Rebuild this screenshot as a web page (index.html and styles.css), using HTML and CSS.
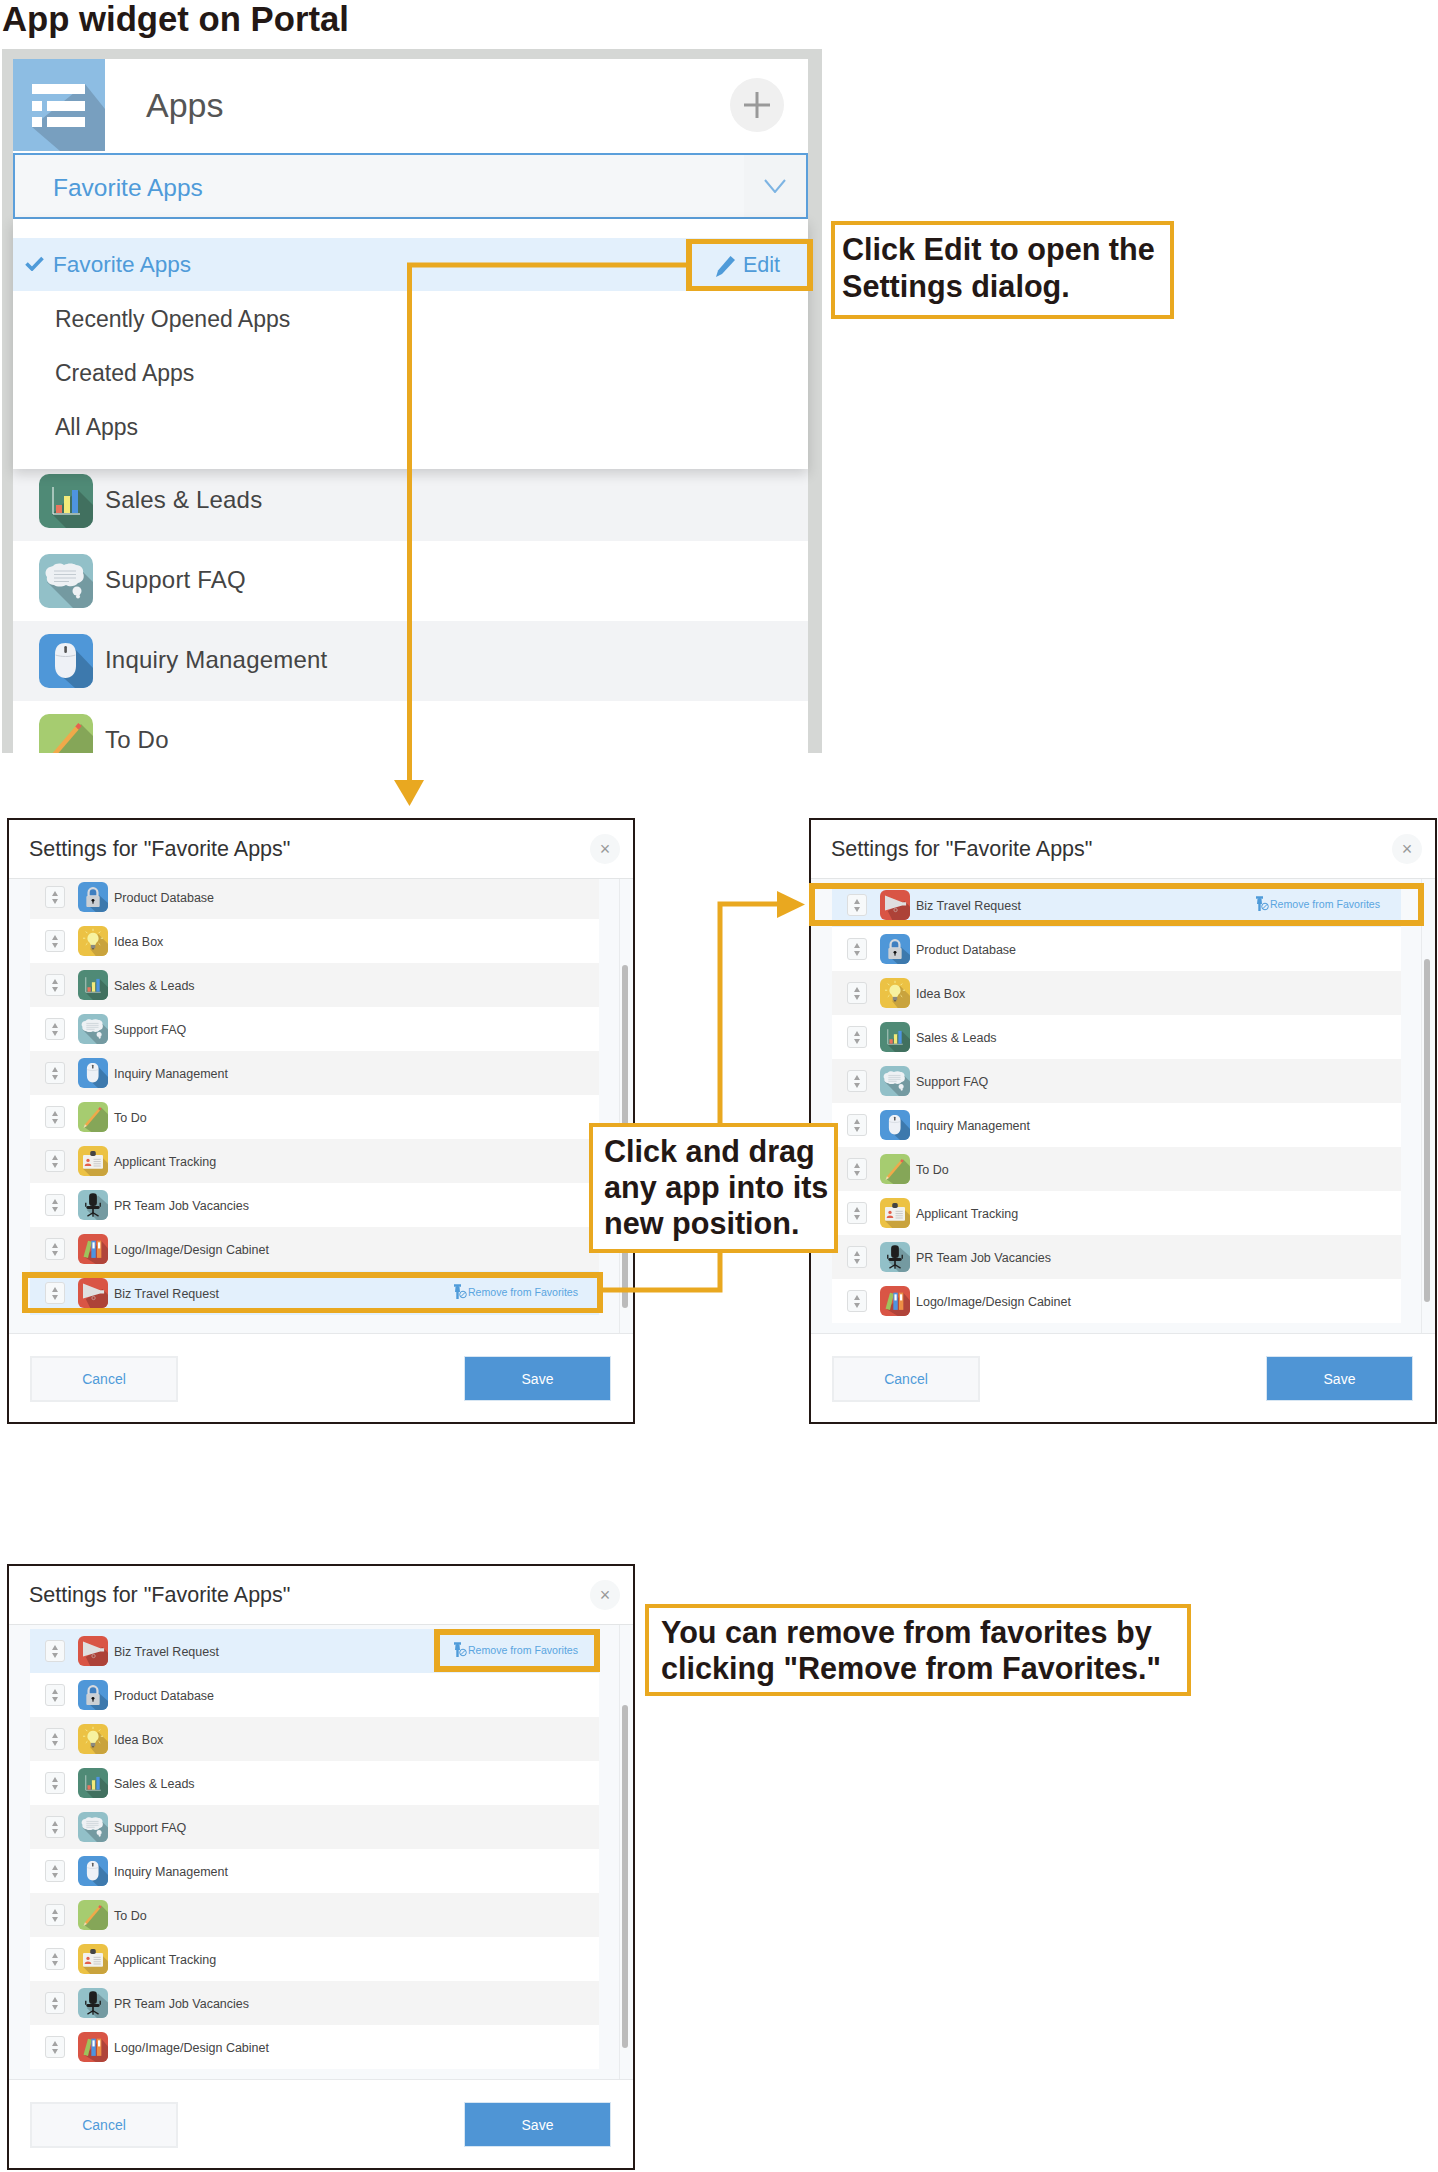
FILE: index.html
```html
<!DOCTYPE html>
<html lang="en">
<head>
    <meta charset="UTF-8">
    <title>App widget on Portal</title>
    <link rel="stylesheet" href="styles.css">
</head>
<body>

<svg class="icon-defs" width="0" height="0">
    <symbol id="i-sales" viewBox="0 0 54 54">
        <rect width="54" height="54" fill="#4f8a76"/>
        <polygon points="39,16 54,31 54,54 27,54 13,40" fill="#41705f"/>
        <path d="M14 13V40H41" fill="none" stroke="#fff" stroke-width="1"/>
        <rect x="17" y="31" width="6" height="8" fill="#e8755f"/>
        <rect x="25" y="22" width="6" height="17" fill="#f3ea7a"/>
        <rect x="33" y="16" width="6" height="23" fill="#4e94e0"/>
    </symbol>
    <symbol id="i-faq" viewBox="0 0 54 54">
        <rect width="54" height="54" fill="#92c0c8"/>
        <polygon points="44,18 54,28 54,54 34,54 8,28" fill="#749aa1"/>
        <path d="M14 12c3-3 8-3 11-1c4-2 9-2 12 0c5 0 8 4 7 8c2 4 0 9-5 10c-3 4-9 4-12 2c-4 2-9 2-12 0c-5 0-8-4-7-8c-3-4-1-9 3-10z" fill="#eef1f4"/>
        <path d="M15 17H37M15 20.5H37M15 24H37M15 27.5H30" stroke="#c3cbd1" stroke-width="1.2"/>
        <circle cx="38" cy="37" r="4.5" fill="#eef1f4"/>
        <circle cx="39" cy="42.5" r="2" fill="#eef1f4"/>
    </symbol>
    <symbol id="i-mouse" viewBox="0 0 54 54">
        <rect width="54" height="54" fill="#4f97d8"/>
        <polygon points="35,14 54,34 54,54 36,54 18,38" fill="#3d79ad"/>
        <path d="M26.5 9c6 0 10.5 3 10.5 11v12c0 8-5 12-10.5 12s-10.5-4-10.5-12v-12c0-8 4.5-11 10.5-11z" fill="#eef1f6"/>
        <path d="M16.5 21c6 2 14 2 20 0" fill="none" stroke="#c9ced6"/>
        <rect x="25.3" y="12" width="2.6" height="7" rx="1.2" fill="#555"/>
    </symbol>
    <symbol id="i-todo" viewBox="0 0 54 54">
        <rect width="54" height="54" fill="#a6cc70"/>
        <polygon points="42,10 54,22 54,54 24,54 11,45" fill="#85a658"/>
        <path d="M14 42L38 14" stroke="#f0a94a" stroke-width="4.500"/>
        <path d="M38 14L41 10.500" stroke="#e8604f" stroke-width="4.500"/>
        <polygon points="10,47 12.500,40 16,43.200" fill="#f5dcb0"/>
    </symbol>
    <symbol id="i-lock" viewBox="0 0 54 54">
        <rect width="54" height="54" fill="#4f97d8"/>
        <polygon points="38,24 54,38 54,54 32,54 16,40" fill="#3d79ad"/>
        <path d="M19 26V19a8 8 0 0 1 16 0V26z" fill="#3f7fc0" stroke="#d6d9de" stroke-width="4"/>
        <rect x="15" y="25" width="24" height="20" rx="2" fill="#ccd0d4"/>
        <circle cx="27" cy="33" r="2.6" fill="#111"/>
        <rect x="26" y="33" width="2" height="6" fill="#111"/>
    </symbol>
    <symbol id="i-idea" viewBox="0 0 54 54">
        <rect width="54" height="54" fill="#ecc244"/>
        <polygon points="36,14 54,32 54,54 32,54 22,42" fill="#c9a33d"/>
        <path d="M27 5V9M14 10L17 13M40 10L37 13M9 22H13M41 22H45M14 34L17 31M40 34L37 31" stroke="#f7ef9c" stroke-width="1.6"/>
        <path d="M27 12a10 10 0 0 1 6 18l-2 4h-8l-2-4a10 10 0 0 1 6-18z" fill="#f7f2a0"/>
        <rect x="23" y="34" width="8" height="6" fill="#8a8a80"/>
        <rect x="25" y="40" width="4" height="2" fill="#555"/>
    </symbol>
    <symbol id="i-applicant" viewBox="0 0 54 54">
        <rect width="54" height="54" fill="#ecc244"/>
        <polygon points="45,22 54,31 54,54 22,54 9,41" fill="#c9a33d"/>
        <rect x="9" y="16" width="36" height="25" rx="2" fill="#f1f1ee"/>
        <rect x="22" y="9" width="10" height="9" rx="3" fill="#444"/>
        <circle cx="18" cy="26" r="3" fill="#e2604c"/>
        <path d="M12 36c0-6 12-6 12 0z" fill="#e2604c"/>
        <path d="M28 24H41M28 28H41M28 32H41M28 36H41" stroke="#c6c6c6" stroke-width="1.6"/>
    </symbol>
    <symbol id="i-chair" viewBox="0 0 54 54">
        <rect width="54" height="54" fill="#92c0c8"/>
        <polygon points="36,10 54,26 54,54 34,54 16,36" fill="#749aa1"/>
        <rect x="20" y="6" width="14" height="23" rx="6" fill="#1e1e1e"/>
        <rect x="15" y="29" width="24" height="5" rx="2.5" fill="#1e1e1e"/>
        <path d="M14 23V30M40 23V30" stroke="#1e1e1e" stroke-width="2.4"/>
        <rect x="25.5" y="33" width="3" height="9" fill="#1e1e1e"/>
        <path d="M17 47L27 41L37 47M27 41V48" fill="none" stroke="#1e1e1e" stroke-width="2.4"/>
    </symbol>
    <symbol id="i-cabinet" viewBox="0 0 54 54">
        <rect width="54" height="54" fill="#d95545"/>
        <polygon points="42,12 54,26 54,54 32,54 12,42" fill="#b0443a"/>
        <polygon points="18,12 25,14 18,43 10,41" fill="#9fc25c"/>
        <rect x="24" y="12" width="8" height="31" fill="#4e94e0"/>
        <rect x="34" y="12" width="8" height="31" fill="#ed8f45"/>
        <rect x="26" y="15" width="4" height="11" fill="#fff"/>
        <rect x="36" y="15" width="4" height="11" fill="#fff"/>
    </symbol>
    <symbol id="i-biz" viewBox="0 0 54 54">
        <rect width="54" height="54" fill="#d95545"/>
        <polygon points="44,20 54,30 54,54 22,54 14,38" fill="#ad4238"/>
        <polygon points="9,10 40,22 47,22 47,28 40,28 9,37" fill="#dfdfdf"/>
        <circle cx="28" cy="36" r="3" fill="none" stroke="#c9a6a0" stroke-width="1.4"/>
    </symbol>
    <symbol id="i-unpin" viewBox="0 0 14 16">
        <path d="M1 1.500H8M4.500 1V15" stroke="#4f9bd9" stroke-width="2.400"/>
        <path d="M2.500 3H6.500L7 8H2z" fill="#4f9bd9"/>
        <circle cx="10" cy="10.500" r="3.300" fill="#e3f0fc" stroke="#4f9bd9"/>
        <path d="M7.700 12.800L12.300 8.200" stroke="#4f9bd9"/>
    </symbol>
</svg>

<h1 class="page-title">App widget on Portal</h1>

<section class="widget">
    <div class="widget-inner">
        <header class="widget-head">
            <svg class="widget-logo" viewBox="0 0 92 92">
                <rect width="92" height="92" fill="#8dbde3"/>
                <polygon points="72,25 92,50 92,92 47,92 19,68" fill="#789fbf"/>
                <path d="M19 25H72V35H19zM19 42H29V52H19zM34 42H72V52H34zM19 58H29V68H19zM34 58H72V68H34z" fill="#fff"/>
            </svg>
            <span class="widget-title">Apps</span>
            <span class="add-btn">
                <svg width="26" height="26" viewBox="0 0 26 26"><path d="M13 0V26M0 13H26" stroke="#999" stroke-width="3"/></svg>
            </span>
        </header>
        <div class="dropdown">
            <span class="dropdown-label">Favorite Apps</span>
            <span class="dropdown-arrow">
                <svg width="22" height="14" viewBox="0 0 22 14"><path d="M1 1L11 13L21 1" fill="none" stroke="#7db4e3" stroke-width="2"/></svg>
            </span>
        </div>
        <div class="menu">
            <div class="menu-item menu-item-active">
                <svg class="check" width="19" height="15" viewBox="0 0 19 15"><path d="M1.5 7.5L7 13L17.5 2" fill="none" stroke="#4f9bd9" stroke-width="3.6"/></svg>
                <span>Favorite Apps</span>
                <span class="edit-link">
                    <svg width="21" height="22" viewBox="0 0 21 22"><path d="M15.5 1L20 5L7 19L1 22L3 15.500z" fill="#4f9bd9"/></svg>
                    Edit
                </span>
                <span class="edit-mark"></span>
            </div>
            <div class="menu-item">Recently Opened Apps</div>
            <div class="menu-item">Created Apps</div>
            <div class="menu-item">All Apps</div>
        </div>
        <div class="app-list">
            <div class="app-row app-row-grey"><svg class="app-icon"><use href="#i-sales"/></svg><span class="app-name">Sales &amp; Leads</span></div>
            <div class="app-row"><svg class="app-icon"><use href="#i-faq"/></svg><span class="app-name">Support FAQ</span></div>
            <div class="app-row app-row-grey"><svg class="app-icon"><use href="#i-mouse"/></svg><span class="app-name">Inquiry Management</span></div>
            <div class="app-row"><svg class="app-icon"><use href="#i-todo"/></svg><span class="app-name">To Do</span></div>
        </div>
    </div>
</section>

<div class="dialog-row">
    <section class="dialog">
        <header class="dialog-head"><h2>Settings for "Favorite Apps"</h2><span class="close">×</span></header>
        <div class="dialog-body">
            <div class="rows">
                <div class="row row-grey row-cut"><span class="handle"></span><svg class="row-icon"><use href="#i-lock"/></svg><span>Product Database</span></div>
                <div class="row"><span class="handle"></span><svg class="row-icon"><use href="#i-idea"/></svg><span>Idea Box</span></div>
                <div class="row row-grey"><span class="handle"></span><svg class="row-icon"><use href="#i-sales"/></svg><span>Sales &amp; Leads</span></div>
                <div class="row"><span class="handle"></span><svg class="row-icon"><use href="#i-faq"/></svg><span>Support FAQ</span></div>
                <div class="row row-grey"><span class="handle"></span><svg class="row-icon"><use href="#i-mouse"/></svg><span>Inquiry Management</span></div>
                <div class="row"><span class="handle"></span><svg class="row-icon"><use href="#i-todo"/></svg><span>To Do</span></div>
                <div class="row row-grey"><span class="handle"></span><svg class="row-icon"><use href="#i-applicant"/></svg><span>Applicant Tracking</span></div>
                <div class="row"><span class="handle"></span><svg class="row-icon"><use href="#i-chair"/></svg><span>PR Team Job Vacancies</span></div>
                <div class="row row-grey"><span class="handle"></span><svg class="row-icon"><use href="#i-cabinet"/></svg><span>Logo/Image/Design Cabinet</span></div>
                <div class="row row-active"><span class="handle"></span><svg class="row-icon"><use href="#i-biz"/></svg><span>Biz Travel Request</span>
                    <span class="remove"><svg width="14" height="16"><use href="#i-unpin"/></svg>Remove from Favorites</span>
                    <span class="mark mark-low"></span>
                </div>
            </div>
            <div class="gutter"><div class="thumb thumb-low"></div></div>
        </div>
        <footer class="dialog-foot"><span class="btn-cancel">Cancel</span><span class="btn-save">Save</span></footer>
    </section>

    <section class="dialog">
        <header class="dialog-head"><h2>Settings for "Favorite Apps"</h2><span class="close">×</span></header>
        <div class="dialog-body">
            <div class="rows rows-top">
                <div class="row row-active"><span class="handle"></span><svg class="row-icon"><use href="#i-biz"/></svg><span>Biz Travel Request</span>
                    <span class="remove"><svg width="14" height="16"><use href="#i-unpin"/></svg>Remove from Favorites</span>
                    <span class="mark mark-wide"></span>
                </div>
                <div class="row"><span class="handle"></span><svg class="row-icon"><use href="#i-lock"/></svg><span>Product Database</span></div>
                <div class="row row-grey"><span class="handle"></span><svg class="row-icon"><use href="#i-idea"/></svg><span>Idea Box</span></div>
                <div class="row"><span class="handle"></span><svg class="row-icon"><use href="#i-sales"/></svg><span>Sales &amp; Leads</span></div>
                <div class="row row-grey"><span class="handle"></span><svg class="row-icon"><use href="#i-faq"/></svg><span>Support FAQ</span></div>
                <div class="row"><span class="handle"></span><svg class="row-icon"><use href="#i-mouse"/></svg><span>Inquiry Management</span></div>
                <div class="row row-grey"><span class="handle"></span><svg class="row-icon"><use href="#i-todo"/></svg><span>To Do</span></div>
                <div class="row"><span class="handle"></span><svg class="row-icon"><use href="#i-applicant"/></svg><span>Applicant Tracking</span></div>
                <div class="row row-grey"><span class="handle"></span><svg class="row-icon"><use href="#i-chair"/></svg><span>PR Team Job Vacancies</span></div>
                <div class="row"><span class="handle"></span><svg class="row-icon"><use href="#i-cabinet"/></svg><span>Logo/Image/Design Cabinet</span></div>
            </div>
            <div class="gutter"><div class="thumb"></div></div>
        </div>
        <footer class="dialog-foot"><span class="btn-cancel">Cancel</span><span class="btn-save">Save</span></footer>
    </section>
</div>

<div class="dialog-row dialog-row-last">
    <section class="dialog">
        <header class="dialog-head"><h2>Settings for "Favorite Apps"</h2><span class="close">×</span></header>
        <div class="dialog-body">
            <div class="rows rows-top">
                <div class="row row-active"><span class="handle"></span><svg class="row-icon"><use href="#i-biz"/></svg><span>Biz Travel Request</span>
                    <span class="remove"><svg width="14" height="16"><use href="#i-unpin"/></svg>Remove from Favorites</span>
                    <span class="mark mark-remove"></span>
                </div>
                <div class="row"><span class="handle"></span><svg class="row-icon"><use href="#i-lock"/></svg><span>Product Database</span></div>
                <div class="row row-grey"><span class="handle"></span><svg class="row-icon"><use href="#i-idea"/></svg><span>Idea Box</span></div>
                <div class="row"><span class="handle"></span><svg class="row-icon"><use href="#i-sales"/></svg><span>Sales &amp; Leads</span></div>
                <div class="row row-grey"><span class="handle"></span><svg class="row-icon"><use href="#i-faq"/></svg><span>Support FAQ</span></div>
                <div class="row"><span class="handle"></span><svg class="row-icon"><use href="#i-mouse"/></svg><span>Inquiry Management</span></div>
                <div class="row row-grey"><span class="handle"></span><svg class="row-icon"><use href="#i-todo"/></svg><span>To Do</span></div>
                <div class="row"><span class="handle"></span><svg class="row-icon"><use href="#i-applicant"/></svg><span>Applicant Tracking</span></div>
                <div class="row row-grey"><span class="handle"></span><svg class="row-icon"><use href="#i-chair"/></svg><span>PR Team Job Vacancies</span></div>
                <div class="row"><span class="handle"></span><svg class="row-icon"><use href="#i-cabinet"/></svg><span>Logo/Image/Design Cabinet</span></div>
            </div>
            <div class="gutter"><div class="thumb"></div></div>
        </div>
        <footer class="dialog-foot"><span class="btn-cancel">Cancel</span><span class="btn-save">Save</span></footer>
    </section>
</div>

<!-- annotations on top of the screenshots -->
<svg class="arrows" width="1438" height="2172" viewBox="0 0 1438 2172">
    <path d="M686 265H409.500V782" fill="none" stroke="#e9a820" stroke-width="5"/>
    <polygon points="394,780 424,780 409.500,806" fill="#e9a820"/>
    <path d="M602 1290H720V904H780" fill="none" stroke="#e9a820" stroke-width="5"/>
    <polygon points="777,891 805,904.500 777,918" fill="#e9a820"/>
</svg>

<div class="callout callout-edit">Click Edit to open the<br>Settings dialog.</div>
<div class="callout callout-drag">Click and drag<br>any app into its<br>new position.</div>
<div class="callout callout-remove">You can remove from favorites by<br>clicking "Remove from Favorites."</div>

</body>
</html>
```

FILE: styles.css
```css
* {
  box-sizing: border-box;
}

body {
  margin: 0;
  position: relative;
  width: 1438px;
  height: 2172px;
  overflow: hidden;
  background: #fff;
  font-family: "Liberation Sans", Arial, sans-serif;
  color: #444;
}

.icon-defs {
  position: absolute;
}

.page-title {
  margin: 0 0 11px 2px;
  font-size: 34.700px;
  line-height: 38px;
  font-weight: bold;
  color: #231815;
}

/* widget on top */
.widget {
  width: 820px;
  height: 704px;
  margin-left: 2px;
  padding: 10px 14px 0 11px;
  background: #d5d7d5;
  overflow: hidden;
}

.widget-inner {
  background: #fff;
}

.widget-head {
  display: flex;
  align-items: center;
  height: 94px;
  padding-bottom: 2px;
}

.widget-logo {
  width: 92px;
  height: 92px;
}

.widget-title {
  margin-left: 41px;
  font-size: 34px;
  color: #555;
}

.add-btn {
  display: flex;
  align-items: center;
  justify-content: center;
  width: 54px;
  height: 54px;
  margin-left: auto;
  margin-right: 24px;
  border-radius: 50%;
  background: #f0f0f0;
}

.dropdown {
  display: flex;
  align-items: center;
  height: 66px;
  border: 2px solid #5b9fdb;
  background: #f5f7f9;
}

.dropdown-label {
  margin: 4px 0 0 38px;
  font-size: 24.500px;
  color: #4f9bd9;
}

.dropdown-arrow {
  display: flex;
  align-items: center;
  justify-content: center;
  width: 62px;
  height: 100%;
  margin-left: auto;
  background: #f2f4f6;
}

.menu {
  position: relative;
  z-index: 1;
  padding: 19px 0 16px;
  background: #fff;
  box-shadow: 0 5px 12px rgba(0, 0, 0, 0.16);
}

.menu-item {
  display: flex;
  align-items: center;
  height: 54px;
  padding: 2px 0 0 42px;
  font-size: 23px;
  color: #444;
}

.menu-item-active {
  position: relative;
  height: 53px;
  padding: 0 0 0 40px;
  font-size: 22.600px;
  background: #e3f0fc;
  color: #4f9bd9;
}

.check {
  position: absolute;
  left: 12px;
  top: 18px;
}

.edit-link {
  display: flex;
  align-items: center;
  gap: 7px;
  margin-top: 2px;
  margin-left: auto;
  margin-right: 28px;
  font-size: 21.500px;
}

.edit-mark {
  position: absolute;
  top: 1px;
  bottom: 0;
  right: -5px;
  width: 127px;
  border: 5px solid #e9a820;
  border-width: 5px 6px;
}

.app-list {
  margin-top: -8px;
}

.app-row {
  display: flex;
  align-items: center;
  gap: 12px;
  height: 80px;
  padding-left: 26px;
  background: #fff;
}

.app-row-grey {
  background: #f2f3f5;
}

.app-icon {
  width: 54px;
  height: 54px;
  border-radius: 10px;
}

.app-name {
  margin-bottom: 2px;
  font-size: 24px;
  letter-spacing: 0.2px;
}

/* settings dialogs */
.dialog-row {
  display: flex;
  gap: 174px;
  margin-top: 65px;
  padding-left: 7px;
}

.dialog-row-last {
  margin-top: 140px;
}

.dialog {
  width: 628px;
  height: 606px;
  border: 2px solid #231815;
  background: #fff;
}

.dialog-head {
  display: flex;
  align-items: center;
  justify-content: space-between;
  height: 59px;
  padding: 0 13px 0 20px;
  border-bottom: 1px solid #e3e5e6;
}

.dialog-head h2 {
  margin: 0;
  font-size: 21.500px;
  font-weight: normal;
  color: #333;
}

.close {
  display: flex;
  align-items: center;
  justify-content: center;
  width: 30px;
  height: 30px;
  border-radius: 50%;
  background: #f5f7f8;
  color: #999;
  font-size: 18px;
}

.dialog-body {
  display: flex;
  height: 455px;
  padding-left: 21px;
  background: #f7f9fb;
  border-bottom: 1px solid #e6e8ea;
}

.rows {
  width: 570px;
}

.rows-top {
  margin-top: 4px;
}

.row {
  position: relative;
  display: flex;
  align-items: center;
  height: 44px;
  padding-left: 15px;
  background: #fff;
  font-size: 12.500px;
  color: #444;
}

.row > span:nth-of-type(2) {
  margin: 2px 0 0 -1px;
}

.row-grey {
  background: #f4f4f4;
}

.row-active {
  background: #e3f0fc;
}

.row-cut {
  height: 40px;
  padding-bottom: 4px;
}

.handle {
  display: flex;
  flex-direction: column;
  align-items: center;
  justify-content: center;
  gap: 3px;
  width: 20px;
  height: 22px;
  border: 1px solid #dcdedf;
  border-radius: 3px;
  background: #f7f9fa;
}

.handle::before,
.handle::after {
  content: "";
  border-left: 3px solid transparent;
  border-right: 3px solid transparent;
}

.handle::before {
  border-bottom: 5px solid #a3a3a3;
}

.handle::after {
  border-top: 5px solid #a3a3a3;
}

.row-icon {
  width: 30px;
  height: 30px;
  margin: 0 7px 0 13px;
  border-radius: 6px;
}

.remove {
  display: flex;
  align-items: center;
  gap: 1px;
  margin-left: auto;
  margin-right: 21px;
  margin-bottom: 3px;
  font-size: 10.600px;
  color: #5aa5e0;
}

.mark {
  position: absolute;
  border: 6px solid #e9a820;
}

.mark-low {
  top: 1px;
  bottom: 2px;
  left: -8px;
  right: -4px;
  border-bottom-width: 5px;
}

.mark-wide {
  top: 0;
  bottom: 1px;
  left: -23px;
  right: -23px;
}

.mark-remove {
  top: 0;
  bottom: 1px;
  right: -1px;
  width: 166px;
}

.gutter {
  width: 14px;
  margin-left: 20px;
  border-left: 1px solid #e9ebed;
}

.thumb {
  width: 6px;
  height: 343px;
  margin: 80px 0 0 2px;
  border-radius: 3px;
  background: #bbb;
}

.thumb-low {
  margin-top: 86px;
}

.dialog-foot {
  display: flex;
  align-items: flex-start;
  justify-content: space-between;
  padding: 22px 22px 0 21px;
  font-size: 14px;
}

.btn-cancel,
.btn-save {
  display: flex;
  align-items: center;
  justify-content: center;
}

.btn-cancel {
  width: 148px;
  height: 46px;
  border: 2px solid #eceef0;
  background: #f7f8fa;
  color: #4f9bd9;
}

.btn-save {
  width: 147px;
  height: 45px;
  border: 1px solid #d7e6f3;
  background: #4f95d5;
  color: #fff;
}

/* orange notes */
.arrows {
  position: absolute;
  z-index: 2;
  left: 0;
  top: 0;
  pointer-events: none;
}

.callout {
  position: absolute;
  z-index: 3;
  padding-top: 6px;
  border: 4px solid #e9a820;
  background: #fff;
  color: #231815;
  font-size: 30.600px;
  line-height: 36px;
  font-weight: bold;
  white-space: nowrap;
}

.callout-edit {
  left: 831px;
  top: 221px;
  width: 343px;
  height: 98px;
  padding-left: 7px;
  line-height: 37px;
}

.callout-drag {
  left: 589px;
  top: 1123px;
  width: 249px;
  height: 130px;
  padding-left: 11px;
}

.callout-remove {
  left: 645px;
  top: 1604px;
  width: 546px;
  height: 92px;
  padding-left: 12px;
}
```
